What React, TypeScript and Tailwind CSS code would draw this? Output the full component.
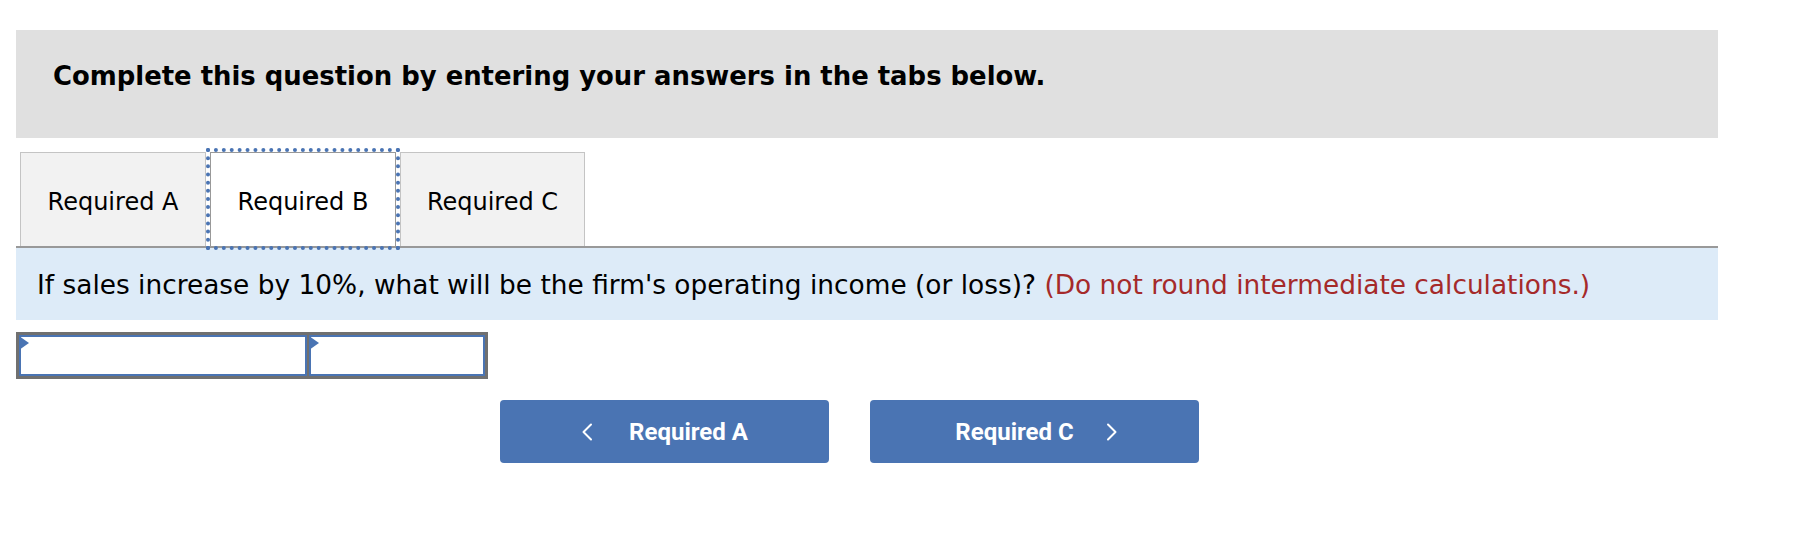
import React from 'react';

const Chevron: React.FC<{ dir: 'left' | 'right' }> = ({ dir }) => (
  <svg width="12" height="18" viewBox="0 0 12 18" fill="none" className="shrink-0">
    <path
      d={dir === 'left' ? 'M10 1.5 L2.5 9 L10 16.5' : 'M2 1.5 L9.5 9 L2 16.5'}
      stroke="white"
      strokeWidth="2"
      strokeLinecap="round"
      strokeLinejoin="round"
    />
  </svg>
);

const AnswerCell: React.FC<{ className: string }> = ({ className }) => (
  <div className={`relative bg-white border-2 border-[#4a74b3] ${className}`}>
    <span className="absolute -left-[2px] -top-[1px] w-0 h-0 border-y-[7px] border-y-transparent border-l-[10px] border-l-[#4a74b3]" />
  </div>
);

const App: React.FC = () => {
  const tabs = ['Required A', 'Required B', 'Required C'];
  const active = 1;

  return (
    <div className="min-h-screen bg-white pt-[30px] pl-4 font-['Verdana','DejaVu_Sans',sans-serif] text-black">
      <div className="w-[1702px]">
        <div className="h-[108px] bg-[#e0e0e0] pl-[37px] pt-[31px]">
          <p className="text-[25.9px] leading-[30px] font-bold">
            Complete this question by entering your answers in the tabs below.
          </p>
        </div>

        <div className="mt-[14px] flex items-end h-[94px] pl-1">
          {tabs.map((tab, i) =>
            i === active ? (
              <div
                key={tab}
                className="relative z-10 mx-1 w-[186px] h-[94px] pt-[4px] flex items-center justify-center bg-white border border-b-0 border-[#999999] outline-4 outline-dotted outline-[#4a74b3] text-[24px]"
              >
                {tab}
              </div>
            ) : (
              <div
                key={tab}
                className={`h-[94px] pt-[4px] flex items-center justify-center bg-[#f2f2f2] border border-b-0 border-[#c4c4c4] text-[24px] ${
                  i === 0 ? 'w-[186px]' : 'w-[185px]'
                }`}
              >
                {tab}
              </div>
            )
          )}
        </div>
        <div className="h-[2px] bg-[#999999]" />

        <div className="h-[72px] bg-[#ddebf8] flex items-center pl-[21px] pt-[1px] text-[26.4px]">
          <p>
            If sales increase by 10%, what will be the firm's operating income (or loss)?{' '}
            <span className="text-[#a52a2a]">(Do not round intermediate calculations.)</span>
          </p>
        </div>

        <div className="mt-3 w-[472px] h-[47px] bg-[#707070] p-[3px] flex gap-[2px]">
          <AnswerCell className="w-[288px]" />
          <AnswerCell className="flex-1" />
        </div>

        <div className="mt-[21px] ml-[484px] flex gap-[41px] font-['Roboto',sans-serif] font-bold text-white text-[24px]">
          <button className="w-[329px] h-[63px] rounded-[4px] bg-[#4a74b3] flex items-center justify-center gap-[36px]">
            <Chevron dir="left" />
            <span>Required A</span>
          </button>
          <button className="w-[329px] h-[63px] rounded-[4px] bg-[#4a74b3] flex items-center justify-center gap-[32px] pl-[4px]">
            <span>Required C</span>
            <Chevron dir="right" />
          </button>
        </div>
      </div>
    </div>
  );
};

export default App;
